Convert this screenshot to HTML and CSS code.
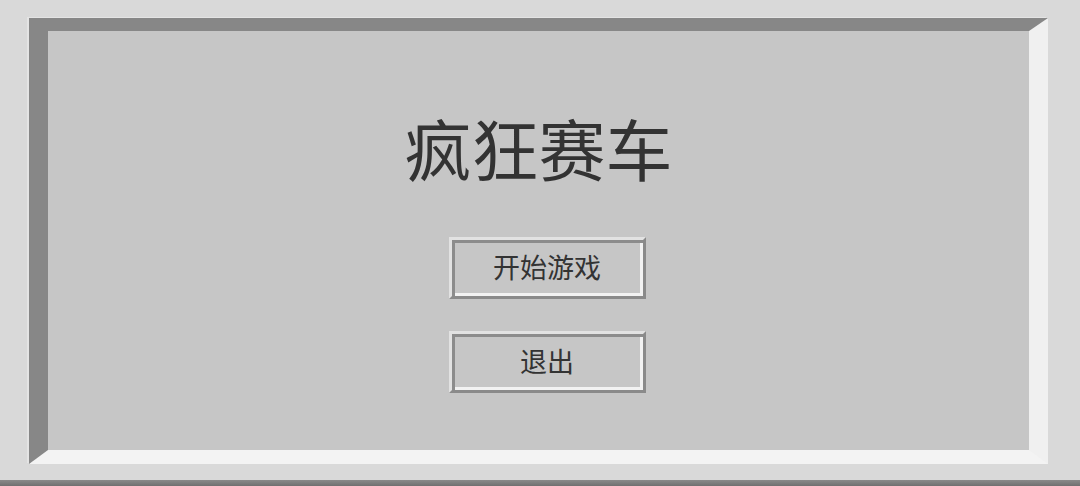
FILE: index.html
```html
<!DOCTYPE html>
<html lang="zh-CN">
<head>
<meta charset="utf-8">
<title>疯狂赛车</title>
<link rel="stylesheet" href="styles.css">
</head>
<body>
<div class="page">
  <div class="frame">
    <h1 class="title">疯狂赛车</h1>
    <div class="menu">
      <button class="btn" type="button">开始游戏</button>
      <button class="btn" type="button">退出</button>
    </div>
  </div>
</div>
<div class="bottom-bar"></div>
</body>
</html>
```

FILE: styles.css
```css
html, body {
  margin: 0;
  padding: 0;
}
body {
  width: 1080px;
  height: 486px;
  overflow: hidden;
  background: #d9d9d9;
  font-family: "Noto Sans CJK SC", "Noto Sans", sans-serif;
  display: flex;
  flex-direction: column;
}
.page {
  flex: 1;
  padding: 18px 32px 0 29px;
}
.frame {
  box-sizing: border-box;
  height: 446px;
  background: #c6c6c6;
  border-style: solid;
  border-width: 13px 19px 14px 19px;
  border-color: #878787 #f0f0f0 #f3f3f3 #878787;
  box-shadow: -2px -1px 0 #e4e4e4;
  display: flex;
  flex-direction: column;
  align-items: center;
  padding-top: 82px;
}
.title {
  margin: 0;
  font-size: 67px;
  line-height: 67px;
  font-weight: 400;
  color: #333333;
}
.menu {
  margin-top: 57px;
  margin-left: 17px;
  display: flex;
  flex-direction: column;
  gap: 32px;
}
.btn {
  box-sizing: border-box;
  width: 197px;
  height: 62px;
  margin: 0;
  padding: 0 0 4px 0;
  background: #c6c6c6;
  border-style: solid;
  border-width: 3px;
  border-color: #e2e2e2 #8a8a8a #8a8a8a #e2e2e2;
  box-shadow: inset 3px 3px 0 #8c8c8c, inset -3px -3px 0 #f2f2f2;
  font-family: "Noto Sans CJK SC", "Noto Sans", sans-serif;
  font-size: 27px;
  line-height: 1;
  color: #333333;
}
.bottom-bar {
  height: 6px;
  background: linear-gradient(#8a8a8a, #707070);
}
```
